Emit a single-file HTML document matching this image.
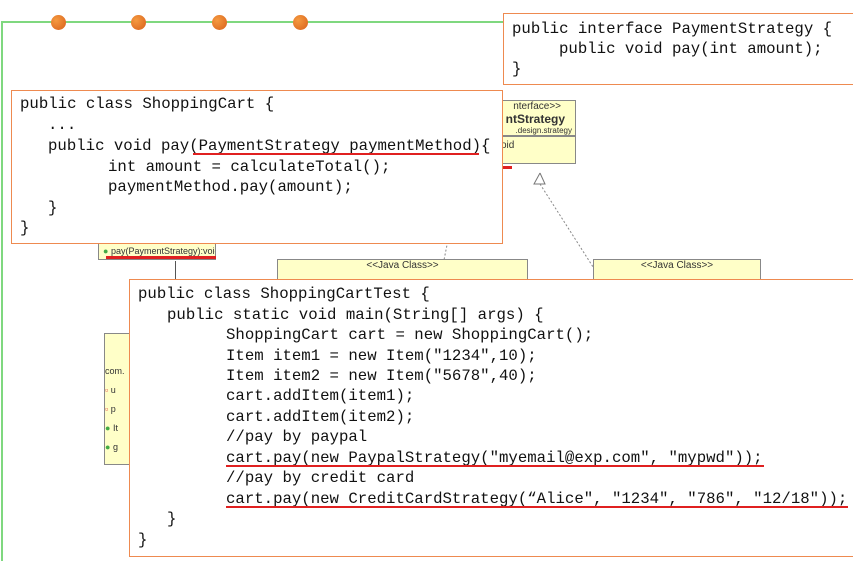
<!DOCTYPE html>
<html><head><style>
body{margin:0;width:853px;height:561px;position:relative;overflow:hidden;background:#fff;font-family:"Liberation Mono",monospace}
.a{position:absolute}
.box{position:absolute;background:#fff;border:1.5px solid #ee8a50;box-sizing:border-box}
.l{position:absolute;font-size:15.7px;white-space:pre;color:#111;line-height:20px;height:20px}
.u{position:absolute;height:2px;background:#e02020}
.uml{position:absolute;background:#ffffc8;border:1px solid #888;font-family:"Liberation Sans",sans-serif;font-size:10px;color:#333;white-space:nowrap;overflow:hidden}
.dot{position:absolute;width:15px;height:15px;border-radius:50%;background:radial-gradient(circle at 35% 35%,#f59a40,#d8601a)}
</style></head><body>
<div class="a" style="left:2px;top:21px;width:502px;height:2px;background:#7fd87f"></div>
<div class="a" style="left:1px;top:21px;width:2px;height:540px;background:#7fd87f"></div>
<div class="dot" style="left:51px;top:15px"></div>
<div class="dot" style="left:131px;top:15px"></div>
<div class="dot" style="left:212px;top:15px"></div>
<div class="dot" style="left:293px;top:15px"></div>

<div class="uml" style="left:470px;top:100px;width:104px;height:62px">
<div style="text-align:right;padding-right:14px">nterface&gt;&gt;</div>
<div style="font-weight:bold;font-size:12px;text-align:right;padding-right:10px">ntStrategy</div>
<div style="font-size:8px;text-align:right;padding-right:3px;border-bottom:2px solid #888">.design.strategy</div>
<div style="padding-left:30px;padding-top:3px">oid</div></div>
<div class="u" style="left:494px;top:166px;width:18px;height:3px"></div>
<svg class="a" style="left:430px;top:170px" width="200" height="110"><polyline points="110,3 104,14 115,14 110,3" fill="#fff" stroke="#777"/><line x1="110" y1="14" x2="165" y2="100" stroke="#888" stroke-dasharray="2,2"/><line x1="20" y1="60" x2="12" y2="100" stroke="#888" stroke-dasharray="2,2"/></svg>
<div class="uml" style="left:98px;top:240px;width:118px;height:20px;font-size:9px;line-height:20px;padding-left:4px;box-sizing:border-box"><span style="color:#4a4">●</span> pay(PaymentStrategy):void</div>
<div class="u" style="left:106px;top:256px;width:110px;height:3px"></div>
<div class="a" style="left:175px;top:261px;width:1px;height:20px;background:#555"></div>
<div class="uml" style="left:277px;top:259px;width:249px;height:25px;text-align:center">&lt;&lt;Java Class&gt;&gt;</div>
<div class="uml" style="left:593px;top:259px;width:166px;height:25px;text-align:center">&lt;&lt;Java Class&gt;&gt;</div>
<div class="uml" style="left:104px;top:333px;width:30px;height:132px;font-size:9px;line-height:19px;padding-top:28px;box-sizing:border-box">com.<br><span style="color:#d44">▫</span> u<br><span style="color:#d44">▫</span> p<br><span style="color:#4a4">●</span> It<br><span style="color:#4a4">●</span> g<br><span style="color:#4a4">●</span> g</div>

<div class="box" style="left:503px;top:13px;width:352px;height:72px"></div>
<div class="l" style="left:512px;top:19px">public interface PaymentStrategy {</div>
<div class="l" style="left:559px;top:39px">public void pay(int amount);</div>
<div class="l" style="left:512px;top:59px">}</div>

<div class="box" style="left:11px;top:90px;width:492px;height:154px"></div>
<div class="l" style="left:20px;top:94px">public class ShoppingCart {</div>
<div class="l" style="left:48px;top:115px">...</div>
<div class="l" style="left:48px;top:136px">public void pay(PaymentStrategy paymentMethod){</div>
<div class="l" style="left:108px;top:157px">int amount = calculateTotal();</div>
<div class="l" style="left:108px;top:177px">paymentMethod.pay(amount);</div>
<div class="l" style="left:48px;top:198px">}</div>
<div class="l" style="left:20px;top:218px">}</div>
<div class="u" style="left:193px;top:153px;width:286px"></div>

<div class="box" style="left:129px;top:279px;width:726px;height:278px"></div>
<div class="l" style="left:138px;top:284px">public class ShoppingCartTest {</div>
<div class="l" style="left:167px;top:305px">public static void main(String[] args) {</div>
<div class="l" style="left:226px;top:325px">ShoppingCart cart = new ShoppingCart();</div>
<div class="l" style="left:226px;top:346px">Item item1 = new Item("1234",10);</div>
<div class="l" style="left:226px;top:366px">Item item2 = new Item("5678",40);</div>
<div class="l" style="left:226px;top:386px">cart.addItem(item1);</div>
<div class="l" style="left:226px;top:407px">cart.addItem(item2);</div>
<div class="l" style="left:226px;top:427px">//pay by paypal</div>
<div class="l" style="left:226px;top:448px">cart.pay(new PaypalStrategy("myemail@exp.com", "mypwd"));</div>
<div class="l" style="left:226px;top:468px">//pay by credit card</div>
<div class="l" style="left:226px;top:489px">cart.pay(new CreditCardStrategy(“Alice", "1234", "786", "12/18"));</div>
<div class="l" style="left:167px;top:509px">}</div>
<div class="l" style="left:138px;top:530px">}</div>
<div class="u" style="left:226px;top:465px;width:538px"></div>
<div class="u" style="left:226px;top:506px;width:622px"></div>
</body></html>
